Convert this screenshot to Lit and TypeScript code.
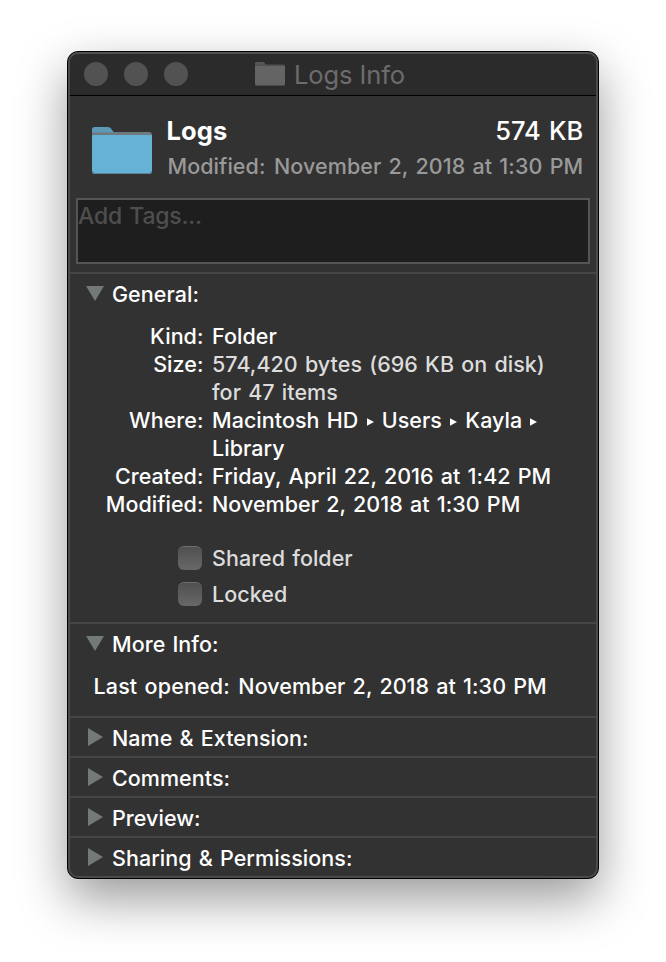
import { LitElement, html, css, svg } from "lit";
import { customElement, property } from "lit/decorators.js";

@customElement("folder-icon")
class FolderIcon extends LitElement {
  @property({ type: Boolean }) muted = false;
  static styles = css`
    :host { display: block; }
    svg { display: block; width: 100%; height: 100%; }
  `;
  render() {
    const front = this.muted ? "#646464" : "#66b2d6";
    const back = this.muted ? "#505050" : "#70797d";
    const tab = this.muted ? "#585858" : "#5c9ab8";
    return html`<svg viewBox="0 0 60 48" preserveAspectRatio="none">
      ${svg`<path fill="${back}" d="M0 9V5h57q3 0 3 3v4H0z"/>
      <path fill="${tab}" d="M0 5.500V2.500q0-2.500 2.500-2.500h13.500q2 0 3 1.500l1.500 2q.8 1 1.500 2z"/>
      <path fill="${front}" d="M0 8.500q0-.5 .8-.5h58.400q.8 0 .8.500V44q0 3-3 3H3q-3 0-3-3z"/>
      <path fill="none" stroke="${this.muted ? "#555" : "#59839a"}" stroke-width="1" d="M.5 44q.3 2.500 3 2.500h53q2.700 0 3-2.500"/>`}
    </svg>`;
  }
}

@customElement("info-section")
class InfoSection extends LitElement {
  @property() label = "";
  @property({ type: Boolean }) open = false;
  static styles = css`
    :host { display: block; border-top: 2px solid #464646; }
    .head { display: flex; align-items: center; height: 38px; padding-left: 18px; }
    .mark { width: 18px; height: 18px; margin-right: 8px; flex: none; }
    .label { line-height: 28px; margin-top: 2px; white-space: nowrap; }
  `;
  render() {
    return html`<div class="head">
        <svg class="mark" viewBox="0 0 18 18">
          <path fill="#737879" d=${this.open ? "M0 2h18L9 17z" : "M2 0v18l15-9z"}></path>
        </svg>
        <span class="label">${this.label}</span>
      </div>
      <slot></slot>`;
  }
}

@customElement("app-root")
class AppRoot extends LitElement {
  static styles = css`
    :host {
      display: block; box-sizing: border-box; width: 666px; height: 962px;
      padding: 51px 67px; background: #fff; overflow: hidden;
      font: 500 21.5px/28px Inter, "Liberation Sans", sans-serif; color: #fff;
      word-spacing: 1.4px; letter-spacing: 0.04px;
    }
    .window {
      box-sizing: border-box; width: 532px; height: 828px; border: 1px solid #000;
      border-radius: 11px; overflow: hidden; background: #323232; position: relative;
      box-shadow: 0 20px 50px rgba(0, 0, 0, 0.4);
    }
    .edge {
      position: absolute; inset: 0; border: 2px solid #4a4a4a; border-top-color: #505050;
      border-radius: 10px; pointer-events: none;
    }
    .title {
      display: flex; align-items: center; height: 43px; background: #2b2b2b;
      border-bottom: 1px solid #000; padding-left: 16px;
    }
    .light { width: 24px; height: 24px; border-radius: 50%; background: #525252; margin-right: 16px; }
    .title folder-icon { width: 30px; height: 24px; margin-left: 51px; margin-right: 9px; }
    .name {
      font-size: 25.5px; font-weight: 400; color: #6c6c6c; letter-spacing: -0.1px;
      word-spacing: 0; line-height: 32px; margin-top: 2px;
    }
    .summary { display: flex; height: 102px; box-sizing: border-box; padding: 18px 15px 0 24px; }
    .summary folder-icon { width: 60px; height: 48px; margin-top: 13px; flex: none; }
    .facts { flex: 1; margin-left: 15px; white-space: nowrap; }
    .line { display: flex; justify-content: space-between; height: 38px; line-height: 34px; font-size: 25.5px; }
    .bold { font-weight: 700; letter-spacing: 0.15px; margin-left: -0.5px; }
    .size { letter-spacing: -0.05px; word-spacing: 1.5px; }
    .date { display: flex; gap: 8.5px; color: #999; letter-spacing: 0.07px; padding-left: 0.5px; }
    .tags {
      box-sizing: border-box; width: 514px; height: 66px; margin: 0 0 8px 8px;
      border: 2px solid #555; background: #1e1e1e; color: #4e4e4e;
      line-height: 32px; font-size: 23px; letter-spacing: -0.2px;
    }
    .rows {
      display: grid; grid-template-columns: 135.5px 1fr; column-gap: 8.5px; padding-top: 10px;
      white-space: nowrap;
    }
    .key { text-align: right; }
    .soft { color: #dcdcdc; }
    .arrow { display: inline-block; width: 7px; height: 8px; margin: 0 8.200px; vertical-align: 2px; }
    .checks { display: grid; gap: 12px; padding: 28px 0 16px 110px; color: #dcdcdc; }
    .check { display: flex; align-items: center; height: 24px; }
    .box {
      box-sizing: border-box; width: 24px; height: 24px; border-radius: 6px; margin-right: 10px;
      background: linear-gradient(#505050, #686868); border-top: 1px solid #6b7073;
    }
    .opened { display: flex; gap: 8.5px; padding: 10px 0 16px 25.5px; white-space: nowrap; }
    .opened span:first-child { letter-spacing: 0.14px; }
  `;

  render() {
    const arrow = html`<svg class="arrow" viewBox="0 0 7 8"><path fill="#fff" d="M0 .3v7.400L7 4z"></path></svg>`;
    return html`<div class="window">
      <div class="title">
        <span class="light"></span><span class="light"></span><span class="light"></span>
        <folder-icon muted></folder-icon><span class="name">Logs Info</span>
      </div>
      <div class="summary">
        <folder-icon></folder-icon>
        <div class="facts">
          <div class="line"><span class="bold">Logs</span><span class="size">574 KB</span></div>
          <div class="date"><span>Modified:</span><span>November 2, 2018 at 1:30 PM</span></div>
        </div>
      </div>
      <div class="tags">Add Tags...</div>
      <info-section open label="General:">
        <div class="rows">
          <span class="key">Kind:</span><span>Folder</span>
          <span class="key">Size:</span>
          <span class="soft">574,420 bytes (696 KB on disk)<br>for 47 items</span>
          <span class="key">Where:</span>
          <span>Macintosh HD${arrow}Users${arrow}Kayla${arrow}<br>Library</span>
          <span class="key">Created:</span><span>Friday, April 22, 2016 at 1:42 PM</span>
          <span class="key">Modified:</span><span>November 2, 2018 at 1:30 PM</span>
        </div>
        <div class="checks">
          <div class="check"><span class="box"></span>Shared folder</div>
          <div class="check"><span class="box"></span>Locked</div>
        </div>
      </info-section>
      <info-section open label="More Info:">
        <div class="opened"><span>Last opened:</span><span>November 2, 2018 at 1:30 PM</span></div>
      </info-section>
      <info-section label="Name &amp; Extension:"></info-section>
      <info-section label="Comments:"></info-section>
      <info-section label="Preview:"></info-section>
      <info-section label="Sharing &amp; Permissions:"></info-section>
      <div class="edge"></div>
    </div>`;
  }
}
